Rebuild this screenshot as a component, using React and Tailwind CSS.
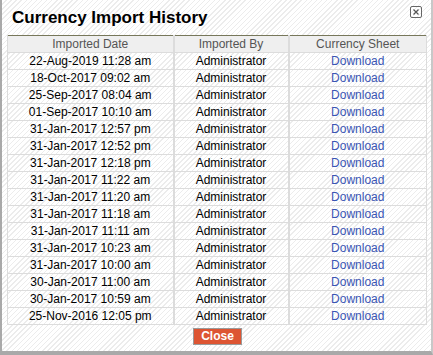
import React from 'react';

const rows = [
  '22-Aug-2019 11:28 am',
  '18-Oct-2017 09:02 am',
  '25-Sep-2017 08:04 am',
  '01-Sep-2017 10:10 am',
  '31-Jan-2017 12:57 pm',
  '31-Jan-2017 12:52 pm',
  '31-Jan-2017 12:18 pm',
  '31-Jan-2017 11:22 am',
  '31-Jan-2017 11:20 am',
  '31-Jan-2017 11:18 am',
  '31-Jan-2017 11:11 am',
  '31-Jan-2017 10:23 am',
  '31-Jan-2017 10:00 am',
  '30-Jan-2017 11:00 am',
  '30-Jan-2017 10:59 am',
  '25-Nov-2016 12:05 pm',
];

export default function App() {
  return (
    <div
      className="w-[433px] h-[355px] border-l-2 border-r-2 border-b-4 border-l-[#a9a9a9] border-r-[#c8c8c8] border-b-[#a9a9a9] bg-[repeating-linear-gradient(135deg,#ffffff_0px,#ffffff_2.6px,#ececec_2.6px,#ececec_3.6px)] text-black"
      style={{ fontFamily: '"Liberation Sans", Arial, sans-serif' }}
    >
      {/* Title bar */}
      <div className="flex items-start justify-between h-[35px] pl-[10px] pr-[9px]">
        <h1 className="mt-[8px] text-[17px] leading-[20px] font-bold">Currency Import History</h1>
        <button className="mt-[6px] w-[12px] h-[12px] border border-[#666] rounded-[2px] flex items-center justify-center">
          <svg width="8" height="8" viewBox="0 0 8 8">
            <path d="M1.5 1.5L6.5 6.5M6.5 1.5L1.5 6.5" stroke="#555" strokeWidth="1.2" />
          </svg>
        </button>
      </div>

      {/* Table */}
      <table className="ml-[5px] w-[420px] border-collapse border-t border-t-[#77775a] text-[12px] leading-[16px]">
        <thead>
          <tr className="bg-[#efefef] text-[#555]">
            <th className="w-[166px] h-[17px] p-0 font-normal border border-[#dcdcdc] border-t-0 border-r-2">Imported Date</th>
            <th className="w-[115px] h-[17px] p-0 font-normal border border-[#dcdcdc] border-t-0 border-r-2">Imported By</th>
            <th className="h-[17px] p-0 font-normal border border-[#dcdcdc] border-t-0">Currency Sheet</th>
          </tr>
        </thead>
        <tbody>
          {rows.map((d) => (
            <tr key={d} className="h-[17px]">
              <td className="p-0 text-center border border-[#dcdcdc] border-r-2">{d}</td>
              <td className="p-0 text-center border border-[#dcdcdc] border-r-2">Administrator</td>
              <td className="p-0 text-center border border-[#dcdcdc]">
                <a href="#" className="text-[#3a55b4]">Download</a>
              </td>
            </tr>
          ))}
        </tbody>
      </table>

      {/* Footer */}
      <div className="flex justify-center pt-[3px]">
        <button className="ml-[2px] h-[17px] px-[7px] border border-[#9a9a9a] bg-[#dd5533] text-white font-bold text-[12px] leading-[15px]">
          Close
        </button>
      </div>
    </div>
  );
}
